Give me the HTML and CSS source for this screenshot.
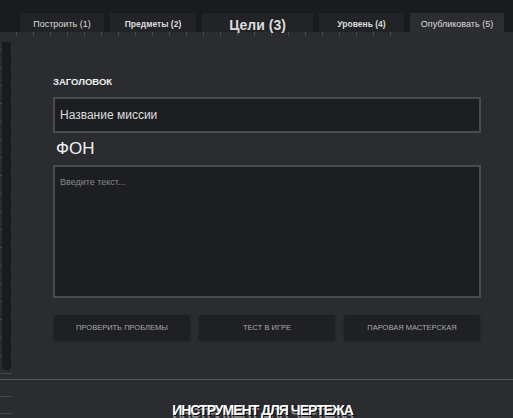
FILE: index.html
```html
<!DOCTYPE html>
<html lang="ru">

<head>
  <meta charset="UTF-8">
  <title>Редактор миссии</title>
  <link rel="stylesheet" href="styles.css">
</head>

<body>

  <!-- вкладки -->
  <div class="topbar">
    <div class="tab tab-build">Построить (1)</div>
    <div class="tab tab-items">Предметы (2)</div>
    <div class="tab tab-goals">Цели (3)</div>
    <div class="tab tab-level">Уровень (4)</div>
    <div class="tab tab-publish active">Опубликовать (5)</div>
  </div>

  <!-- основная панель -->
  <div class="board">
    <div class="side">
      <div class="side-bar"></div>
    </div>

    <div class="panel">
      <div class="label">ЗАГОЛОВОК</div>
      <div class="field">Название миссии</div>

      <div class="heading">ФОН</div>
      <div class="area">Введите текст...</div>

      <div class="actions">
        <button class="act" type="button">Проверить проблемы</button>
        <button class="act" type="button">Тест в игре</button>
        <button class="act" type="button">Паровая мастерская</button>
      </div>
    </div>
  </div>

  <div class="footer">
    <div class="footer-side"></div>
    <div class="footer-title">ИНСТРУМЕНТ ДЛЯ ЧЕРТЕЖА</div>
  </div>

</body>

</html>
```

FILE: styles.css
```css
body {
  margin: 0;
  height: 418px;
  overflow: hidden;
  background-color: #2b2c30;
  font-family: "Liberation Sans", Arial, sans-serif;
  color: #e6e6e6;
}

/* вкладки сверху */
.topbar {
  height: 32px;
  background-color: #1a1b1d;
  display: flex;
  align-items: flex-end;
  gap: 6px;
  padding-left: 20px;
}

.tab {
  height: 19px;
  background-color: #222326;
  display: flex;
  align-items: center;
  justify-content: center;
  padding-top: 3px;
  box-sizing: border-box;
  font-size: 9px;
  color: #dcdcdc;
}

.tab-build { width: 84px; }
.tab-items { width: 86px; font-weight: bold; font-size: 8.5px; }
.tab-goals { width: 111px; font-size: 14px; font-weight: bold; padding-top: 5px; }
.tab-level { width: 85px; font-weight: bold; font-size: 8.5px; }
.tab-publish { width: 94px; }

.tab.active {
  background-color: #2c2d31;
}

/* рабочая область с линейками */
.board {
  height: 347px;
  display: flex;
  background-image: repeating-linear-gradient(to right, transparent 0 16px, #4a4b50 16px 17px);
  background-size: 400px 4px;
  background-repeat: no-repeat;
}

.side {
  width: 12px;
  flex-shrink: 0;
  padding: 10px 1px 9px 2px;
  box-sizing: border-box;
  background-image: repeating-linear-gradient(to bottom, transparent 0 17px, #46474b 17px 18px);
}

.side-bar {
  height: 100%;
  background-color: #1a1b1d;
  border-radius: 0 0 4px 4px;
}

.panel {
  flex: 1;
  padding: 44px 32px 0 41px;
}

.label {
  font-size: 9.5px;
  font-weight: bold;
  line-height: 12px;
  color: #f0f0f0;
  margin-bottom: 9px;
}

.field {
  height: 36px;
  box-sizing: border-box;
  border: 2px solid #4a4b4f;
  background-color: #1d1e21;
  padding-left: 5px;
  display: flex;
  align-items: center;
  font-size: 12px;
  color: #dedede;
}

.heading {
  font-size: 17px;
  line-height: 20px;
  color: #f2f2f2;
  margin: 6px 0 6px 3px;
}

.area {
  height: 133px;
  box-sizing: border-box;
  border: 2px solid #4a4b4f;
  background-color: #1d1e21;
  padding: 10px 5px;
  font-size: 9px;
  color: #88898c;
}

.actions {
  display: grid;
  grid-template-columns: repeat(3, 1fr);
  gap: 9px;
  margin: 17px 1px 0 1px;
}

.act {
  height: 25px;
  border: none;
  background-color: #1f2023;
  color: #a9a9ac;
  font-family: inherit;
  font-size: 7.5px;
  text-transform: uppercase;
  box-shadow: 0 1px 2px rgba(0, 0, 0, 0.35);
}

/* нижняя часть */
.footer {
  border-top: 1px solid #56575b;
  height: 38px;
  display: flex;
}

.footer-side {
  width: 12px;
  background-image: repeating-linear-gradient(to bottom, transparent 0 16px, #46474b 16px 17px);
}

.footer-title {
  flex: 1;
  text-align: center;
  padding-top: 22px;
  font-size: 14px;
  font-weight: bold;
  letter-spacing: -1px;
  color: #ffffff;
  text-shadow: 1px 1px 0 #000, 0 3px 0 #8a8a8a;
}
```
